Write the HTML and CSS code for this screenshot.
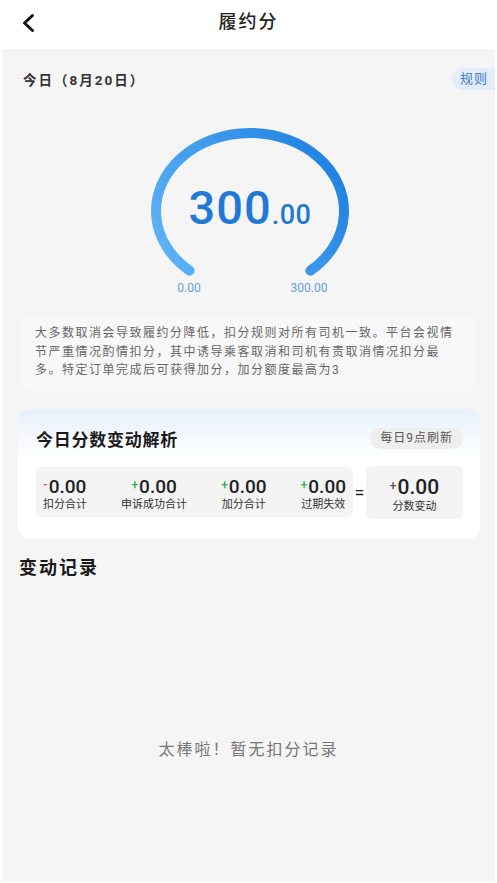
FILE: index.html
```html
<!DOCTYPE html>
<html lang="zh-CN">

<head>
  <meta charset="UTF-8">
  <meta name="viewport" content="width=device-width, initial-scale=1.0">
  <title>履约分</title>
  <link rel="stylesheet" href="styles.css">
</head>

<body>

  <div class="nav">
    <div class="nav-back">
      <svg width="14" height="20" viewBox="0 0 14 20">
        <path d="M11.5 2.5 L3.5 10 L11.5 17.5" fill="none" stroke="#111" stroke-width="3" stroke-linecap="round" stroke-linejoin="round"/>
      </svg>
    </div>
    <div class="nav-title">履约分</div>
    <div></div>
  </div>

  <div class="page">
    <div class="today-row">
      <span class="today">今日（8月20日）</span>
      <span class="rule-tag">规则</span>
    </div>

    <div class="gauge">
      <svg width="220" height="160" viewBox="0 0 220 160">
        <defs>
          <linearGradient id="arcColor" gradientUnits="userSpaceOnUse" x1="16" y1="150" x2="204" y2="20">
            <stop offset="0" stop-color="#62b6f7"/>
            <stop offset="1" stop-color="#1a7ee0"/>
          </linearGradient>
        </defs>
        <path d="M49.6 150.7 A94 78 0 1 1 170.4 150.7" fill="none" stroke="url(#arcColor)" stroke-width="10" stroke-linecap="round"/>
      </svg>
      <div class="score">300<span class="score-dec">.00</span></div>
      <div class="gauge-labels">
        <span>0.00</span>
        <span>300.00</span>
      </div>
    </div>

    <p class="desc">大多数取消会导致履约分降低，扣分规则对所有司机一致。平台会视情节严重情况酌情扣分，其中诱导乘客取消和司机有责取消情况扣分最多。特定订单完成后可获得加分，加分额度最高为3</p>

    <div class="card">
      <div class="card-head">
        <span class="card-title">今日分数变动解析</span>
        <span class="refresh-tag">每日9点刷新</span>
      </div>
      <div class="stats-row">
        <div class="stat-box">
          <div class="stat">
            <div class="stat-val"><span class="sign minus">-</span>0.00</div>
            <div class="stat-label">扣分合计</div>
          </div>
          <div class="stat">
            <div class="stat-val"><span class="sign plus">+</span>0.00</div>
            <div class="stat-label">申诉成功合计</div>
          </div>
          <div class="stat">
            <div class="stat-val"><span class="sign plus">+</span>0.00</div>
            <div class="stat-label">加分合计</div>
          </div>
          <div class="stat">
            <div class="stat-val"><span class="sign plus">+</span>0.00</div>
            <div class="stat-label">过期失效</div>
          </div>
        </div>
        <div class="equal">=</div>
        <div class="total-box">
          <div class="total-val"><span class="sign">+</span>0.00</div>
          <div class="stat-label">分数变动</div>
        </div>
      </div>
    </div>

    <h2 class="record-title">变动记录</h2>
    <div class="empty">太棒啦！暂无扣分记录</div>
  </div>

</body>

</html>
```

FILE: styles.css
```css
body {
  margin: 0;
  background: #fff;
  font-family: "Roboto", "Noto Sans CJK SC", sans-serif;
  color: #222;
}

.nav {
  height: 49px;
  display: grid;
  grid-template-columns: 60px 1fr 60px;
  box-sizing: border-box;
}

.nav-back {
  padding: 13px 0 0 21px;
}

.nav-back svg {
  display: block;
}

.nav-title {
  padding-top: 10px;
  text-align: center;
  font-size: 18px;
  line-height: 24px;
  letter-spacing: 2px;
  font-weight: 500;
  color: #222;
}

.page {
  background: #f5f5f5;
  margin: 0 2px;
  height: 832px;
  overflow: hidden;
}

.today-row {
  display: flex;
  justify-content: space-between;
  align-items: center;
  padding: 19px 0 0 21px;
  height: 22px;
}

.today {
  font-size: 13.5px;
  font-weight: 700;
  letter-spacing: 2px;
  color: #333;
}

.rule-tag {
  height: 22px;
  line-height: 22px;
  padding: 0 7px 0 8px;
  background: #e3ecf8;
  color: #3b7dd0;
  font-size: 13px;
  letter-spacing: 1px;
  border-radius: 11px 0 0 11px;
}

/* gauge */
.gauge {
  position: relative;
  width: 220px;
  margin: 30px 0 0 138px;
}

.gauge svg {
  display: block;
}

.score {
  position: absolute;
  left: 0;
  right: 0;
  top: 64px;
  text-align: center;
  font-size: 47px;
  line-height: 47px;
  font-weight: 500;
  letter-spacing: 1px;
  color: #1f7ad6;
}

.score-dec {
  font-size: 27px;
  letter-spacing: 0.5px;
}

.gauge-labels {
  display: flex;
  justify-content: space-between;
  padding: 0 21px 0 19px;
}

.gauge-labels span {
  width: 60px;
  text-align: center;
  font-size: 12px;
  line-height: 16px;
  color: #64a0dc;
}

.desc {
  margin: 21px 20px 0;
  padding: 7px 13px 11px;
  background: #f8f8f8;
  border-radius: 8px;
  font-size: 12px;
  letter-spacing: 1.5px;
  line-height: 18.5px;
  color: #666;
}

/* today's change card */
.card {
  margin: 18px 15px 0 16px;
  padding: 18px 17px 20px 18px;
  border-radius: 12px;
  background: linear-gradient(180deg, #e7f0fc 0, #fff 50px);
}

.card-head {
  display: flex;
  justify-content: space-between;
  align-items: center;
  height: 24px;
}

.card-title {
  font-size: 17px;
  font-weight: 600;
  letter-spacing: 0.75px;
  color: #1a1a1a;
}

.refresh-tag {
  height: 21px;
  line-height: 21px;
  padding: 0 10px;
  border-radius: 11px;
  background: #eeeeee;
  font-size: 12px;
  letter-spacing: 1px;
  color: #555;
}

.stats-row {
  display: flex;
  align-items: center;
  margin-top: 15px;
}

.stat-box {
  width: 317px;
  box-sizing: border-box;
  display: flex;
  justify-content: space-between;
  padding: 8px 7px 5px;
  background: #f4f4f4;
  border-radius: 6px;
}

.stat {
  text-align: center;
}

.stat-val {
  font-size: 19px;
  line-height: 20px;
  font-weight: 500;
  color: #222;
}

.sign {
  font-size: 12px;
  vertical-align: 4px;
  margin-right: 1px;
  color: #555;
}

.sign.minus {
  color: #e0474c;
}

.sign.plus {
  color: #2bb34c;
}

.stat-label {
  font-size: 11px;
  line-height: 15px;
  color: #333;
}

.equal {
  width: 13px;
  text-align: center;
  font-size: 18px;
  color: #222;
}

.total-box {
  width: 97px;
  padding: 8px 0 5px;
  background: #f4f4f4;
  border-radius: 6px;
  text-align: center;
}

.total-val {
  font-size: 21px;
  line-height: 24px;
  font-weight: 500;
  color: #222;
}

.record-title {
  margin: 17px 0 0 17px;
  font-size: 18px;
  font-weight: 600;
  line-height: 24px;
  letter-spacing: 2px;
  color: #1a1a1a;
}

.empty {
  margin-top: 160px;
  text-align: center;
  font-size: 16px;
  line-height: 20px;
  letter-spacing: 2px;
  color: #777;
}
```
